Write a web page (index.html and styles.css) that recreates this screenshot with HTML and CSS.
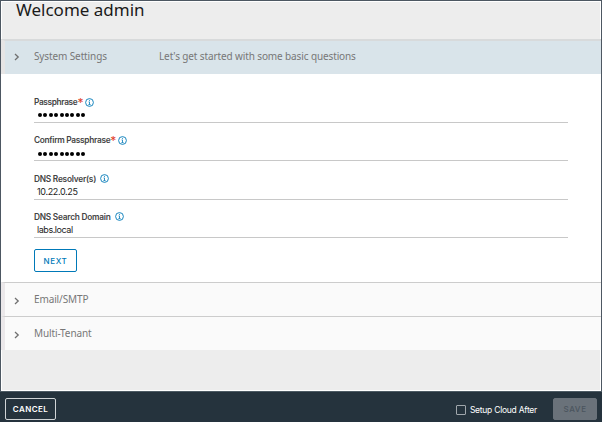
FILE: index.html
```html
<!DOCTYPE html>
<html lang="en">
<head>
<meta charset="utf-8">
<title>Welcome admin</title>
<link rel="stylesheet" href="styles.css">
</head>
<body>
<svg class="defs" width="0" height="0">
  <symbol id="info" viewBox="0 0 9 9"><circle cx="4.5" cy="4.5" r="3.9" fill="none" stroke="currentColor" stroke-width=".9"/><path d="M4.5 1.9v1M3.6 3.9h.9v2.7M3.4 6.6h2.2" fill="none" stroke="currentColor" stroke-width=".8"/></symbol>
  <symbol id="chevron" viewBox="0 0 6 8"><path d="M1 1l3.2 3L1 7" fill="none" stroke="currentColor" stroke-width="1.3"/></symbol>
</svg>
<div class="window">
  <main class="page">
    <h1 class="title"><span>Welcome admin</span></h1>
    <section class="step step-active">
      <svg class="chevron"><use href="#chevron"/></svg>
      <span class="step-name">System Settings</span>
      <span class="step-text">Let's get started with some basic questions</span>
    </section>
    <form class="form">
      <div class="field">
        <div class="label"><span class="l1">Passphrase</span><b class="req">*</b><svg class="info"><use href="#info"/></svg></div>
        <div class="value dots"><i></i><i></i><i></i><i></i><i></i><i></i><i></i><i></i><i></i></div>
      </div>
      <div class="field">
        <div class="label"><span class="l2">Confirm Passphrase</span><b class="req">*</b><svg class="info"><use href="#info"/></svg></div>
        <div class="value dots dots-confirm"><i></i><i></i><i></i><i></i><i></i><i></i><i></i><i></i><i></i></div>
      </div>
      <div class="field">
        <div class="label"><span class="l3">DNS Resolver(s)</span><svg class="info spaced"><use href="#info"/></svg></div>
        <div class="value">10.22.0.25</div>
      </div>
      <div class="field">
        <div class="label"><span class="l4">DNS Search Domain</span><svg class="info spaced"><use href="#info"/></svg></div>
        <div class="value v4">labs.local</div>
      </div>
      <button type="button" class="btn next">NEXT</button>
    </form>
    <section class="step"><svg class="chevron"><use href="#chevron"/></svg><span class="step-name">Email/SMTP</span></section>
    <section class="step"><svg class="chevron"><use href="#chevron"/></svg><span class="step-name">Multi-Tenant</span></section>
  </main>
  <footer class="footer">
    <button type="button" class="btn cancel">CANCEL</button>
    <span class="check"><span class="box"></span><span class="check-text">Setup Cloud After</span></span>
    <button type="button" class="btn save" disabled>SAVE</button>
  </footer>
</div>
</body>
</html>
```
FILE: styles.css
```css
* { box-sizing: border-box; }
body { margin: 0; font-family: Inter, "Open Sans", sans-serif; }
.defs { display: block; }
.window { width: 602px; height: 422px; display: flex; flex-direction: column; overflow: hidden; }
.page { height: 391px; border: 1px solid #4d5762; border-bottom: 0; background: #ededed; box-shadow: inset 0 0 0 1px #fff; }
.title { margin: 0; height: 38px; padding-left: 15px; font: 400 17px/18px "Noto Sans", sans-serif; color: #1a1a1a; white-space: nowrap; }
.step { height: 34px; border-top: 1px solid #ccc; border-left: 4px solid #ebe8ea; background: #fafafa; display: flex; align-items: center; font: 400 10px/14px "Noto Sans", sans-serif; letter-spacing: -.12px; color: #777; white-space: nowrap; }
.step-active { height: 35px; border-top: 2px solid #d8dadb; background: #d9e4ea; border-left-color: #e6e5e5; }
.step-active .step-name, .step-active .step-text { margin-top: -3px; }
.step-active .chevron { top: -1px; }
.chevron { width: 6px; height: 8px; margin-left: 9px; margin-right: 14px; color: #707070; position: relative; top: 1px; }
.step-name { width: 125px; margin-top: -1px; }
.form { height: 208px; margin: 0; padding: 21px 33px 0; background: #fff; }
.field { height: 28px; margin-bottom: 10.3px; border-bottom: 1px solid #c8c8c8; }
.label { height: 14px; display: flex; align-items: center; font-size: 8.3px; font-weight: 600; letter-spacing: -.23px; color: #444; white-space: nowrap; }
.l1 { letter-spacing: -.35px; }
.l2 { letter-spacing: -.29px; }
.req { color: #e0402a; font-size: 12px; font-weight: 400; line-height: 8px; padding-top: 2px; }
.info { width: 9px; height: 9px; margin-left: 2px; color: #0079b8; }
.spaced { margin-left: 4px; }
.value { height: 12px; padding-left: 3px; font-size: 9px; line-height: 12px; color: #222; letter-spacing: -.35px; }
.v4 { letter-spacing: -.45px; }
.dots { display: flex; align-items: center; gap: 1.4px; padding-left: 4px; }
.dots-confirm { padding-top: 2px; }
.dots i { width: 4px; height: 4px; border-radius: 50%; background: #000; }
.btn { display: block; padding: 0; border: 1px solid; border-radius: 2px; background: none; font: 500 8px Inter, sans-serif; letter-spacing: .6px; text-align: center; }
.next { width: 43px; height: 23px; margin-top: 11px; padding-top: 1px; color: #0079b8; }
.footer { height: 31px; background: #25333d; border-top: 1px solid #4d5b64; display: flex; align-items: center; padding: 4px 5px 0; }
.cancel { width: 51px; height: 22px; color: #fff; border-color: #d0d4d6; font-weight: 600; letter-spacing: .4px; }
.check { display: flex; align-items: center; gap: 4px; margin-left: auto; color: #fff; font-size: 8.5px; letter-spacing: -.25px; position: relative; top: 1px; }
.box { width: 10px; height: 10px; border: 1px solid #a0a7ac; border-radius: 1px; }
.save { width: 44px; height: 22px; margin-left: 16px; background: #6a727a; border-color: #6a727a; color: #4a555e; }
```
